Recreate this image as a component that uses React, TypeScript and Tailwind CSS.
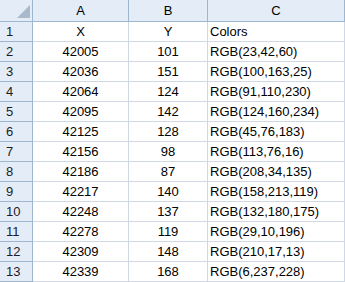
import React from "react";

const rows: [number, string, string, string][] = [
  [1, "X", "Y", "Colors"],
  [2, "42005", "101", "RGB(23,42,60)"],
  [3, "42036", "151", "RGB(100,163,25)"],
  [4, "42064", "124", "RGB(91,110,230)"],
  [5, "42095", "142", "RGB(124,160,234)"],
  [6, "42125", "128", "RGB(45,76,183)"],
  [7, "42156", "98", "RGB(113,76,16)"],
  [8, "42186", "87", "RGB(208,34,135)"],
  [9, "42217", "140", "RGB(158,213,119)"],
  [10, "42248", "137", "RGB(132,180,175)"],
  [11, "42278", "119", "RGB(29,10,196)"],
  [12, "42309", "148", "RGB(210,17,13)"],
  [13, "42339", "168", "RGB(6,237,228)"],
];

export default function App() {
  return (
    <div
      className="w-[345px] h-[282px] bg-white text-[13px] text-black overflow-hidden"
      style={{ fontFamily: '"Liberation Sans", Arial, sans-serif' }}
    >
      <div className="grid grid-cols-[33px_96px_79px_137px] grid-rows-[22px_repeat(13,20px)]">
        <div className="relative bg-[#e4ecf7] border-r border-b border-[#9eb6ce]">
          <svg className="absolute right-[2px] bottom-[3px]" width="13" height="13" viewBox="0 0 13 13">
            <polygon points="13,0 13,13 0,13" fill="#a9b8cb" />
          </svg>
        </div>
        {["A", "B", "C"].map((c) => (
          <div
            key={c}
            className="bg-[#e4ecf7] border-r border-b border-[#9eb6ce] flex items-center justify-center"
          >
            {c}
          </div>
        ))}
        {rows.map(([n, a, b, c]) => (
          <React.Fragment key={n}>
            <div className="bg-[#e4ecf7] border-r border-b border-[#9eb6ce] flex items-center pl-[6px] text-[#1c1c28]">
              {n}
            </div>
            <div className="border-r border-b border-[#d0d7e5] flex items-center justify-center">
              {a}
            </div>
            <div className="border-r border-b border-[#d0d7e5] flex items-center justify-center">
              {b}
            </div>
            <div className="border-r border-b border-[#d0d7e5] flex items-center pl-[2px]">
              {c}
            </div>
          </React.Fragment>
        ))}
      </div>
    </div>
  );
}
